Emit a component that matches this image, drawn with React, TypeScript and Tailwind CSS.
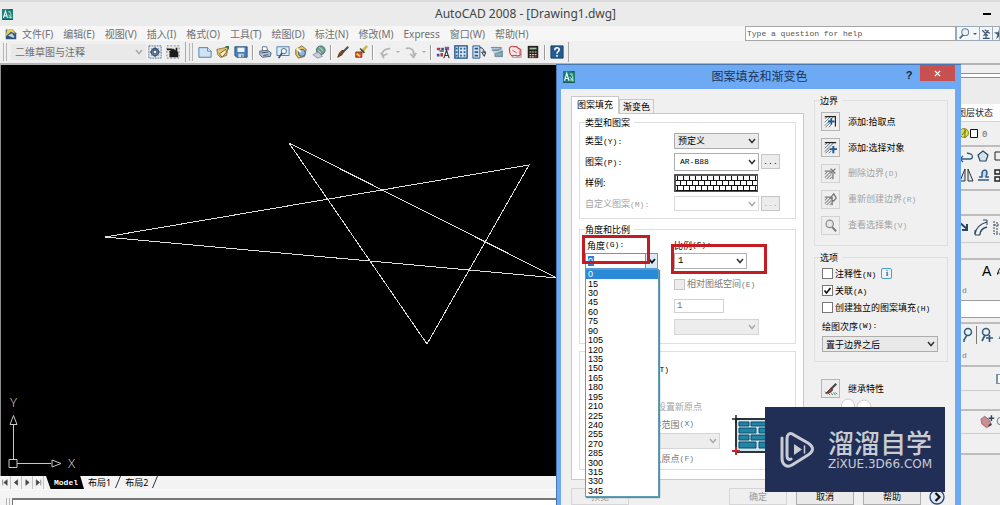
import React from "react";

const MENUS = ["文件(F)", "编辑(E)", "视图(V)", "插入(I)", "格式(O)", "工具(T)", "绘图(D)", "标注(N)", "修改(M)", "Express", "窗口(W)", "帮助(H)"];
const ANGLES = Array.from({ length: 24 }, (_, i) => i * 15);

function Svg({ children, className = "size-[14px]" }: { children: React.ReactNode; className?: string }) {
  return (
    <svg viewBox="0 0 16 16" fill="none" className={`${className} shrink-0`} aria-hidden="true">
      {children}
    </svg>
  );
}

function AppLogo({ className }: { className: string }) {
  return (
    <Svg className={className}>
      <rect width="16" height="16" fill="#1f7f78" />
      <path d="M2 13L5 3l3 10M3 10h4" stroke="#e8fbf5" strokeWidth="1.6" />
      <path d="M9 4h3v3M9 8l5 5M13 7v7M9 12h4" stroke="#a9e8d4" strokeWidth="1.4" />
      <path d="M0 15.500h16M11 1h4" stroke="#0c4a4a" />
    </Svg>
  );
}

const tool: Record<string, React.ReactNode> = {
  new: (
    <>
      <path d="M1 3h10l4 4v7H1z" fill="#cfe3f5" stroke="#47759f" />
      <path d="M11 3v4h4" fill="#fff" stroke="#47759f" />
    </>
  ),
  open: (
    <>
      <path d="M1 5l5-1 8-2-2 10-7 2-3-3z" fill="#e2c87c" stroke="#8b6d2c" />
      <path d="M4 10l7-5 1 3-5 6z" fill="#fff3c4" stroke="#6d5423" />
      <path d="M11 2l3 0v3" stroke="#2e6c3c" strokeWidth="1.5" />
    </>
  ),
  save: (
    <>
      <path d="M1 2h14v12H3l-2-2z" fill="#4a7fb4" stroke="#244b78" />
      <path d="M4 3h8v5H4z" fill="#e9f3fb" />
      <path d="M5 10h6v4H5z" fill="#cddbe8" />
      <path d="M9 11v3" stroke="#244b78" />
    </>
  ),
  print: (
    <>
      <path d="M5 7V2h5l1 5" fill="#fff" stroke="#58667c" />
      <path d="M2 7l9-1 4 3-1 4-9 1-3-3z" fill="#b9c6d6" stroke="#45536b" />
      <path d="M4 9l8-1M6 12l6-1" stroke="#33425b" />
    </>
  ),
  preview: (
    <>
      <path d="M1 2h14v10H1z" fill="#dcecfa" stroke="#47759f" />
      <circle cx="9" cy="7" r="3" fill="#f6fbff" stroke="#3b5878" />
      <path d="M7 9l-4 6" stroke="#3b5878" strokeWidth="2" />
    </>
  ),
  publish: (
    <>
      <path d="M2 5l7-4 5 4-2 8-7 2-3-4z" fill="#e6c359" stroke="#7b672c" />
      <circle cx="9" cy="9" r="4" fill="#8fb8da" stroke="#34547a" />
      <path d="M3 4l5 4" stroke="#fff" strokeWidth="2" />
    </>
  ),
  web: (
    <>
      <circle cx="10" cy="6" r="5" fill="#6d9d8b" stroke="#3b6a70" />
      <path d="M8 3c3 0 3 3 5 4M7 6l3 3" stroke="#d6eddd" />
      <path d="M1 11l6-3 5 5-6 2z" fill="#c8ced6" stroke="#8b939e" />
    </>
  ),
  match: (
    <>
      <path d="M14 2L8 8" stroke="#555" strokeWidth="2.500" />
      <path d="M9 7l-2 4-5 3 2-5 3-3z" fill="#8a4d23" stroke="#462813" />
    </>
  ),
  block: (
    <>
      <path d="M15 1L8 9" stroke="#d9b23b" strokeWidth="3" />
      <path d="M2 8h7v6H2z" fill="#d94e40" stroke="#7f2923" />
      <path d="M7 4l5 5" stroke="#375a31" strokeWidth="2" />
      <path d="M3 10l4 3" stroke="#ffd54a" strokeWidth="2" />
    </>
  ),
  undo: <path d="M7 15c-5-5-1-11 7-11M3 9l3 3 5-2" stroke="#b3b5b8" strokeWidth="2" />,
  redo: <path d="M2 4c6-2 10 2 9 8M7 10l4 4 3-5" stroke="#b3b5b8" strokeWidth="2" />,
  properties: (
    <>
      <path d="M1 2h14v11H1z" fill="#f3f4fa" />
      <path d="M1 3h4v3H1zM5 9h3v4H5z" fill="#c0334a" />
      <path d="M6 3h3v3H6zM1 10h3v3H1z" fill="#33509e" />
      <path d="M10 2h5v4h-5z" fill="#7f59a8" />
      <path d="M4 7h5" stroke="#3e8b55" strokeWidth="2" />
      <path d="M9 15l3-9 3 9M10 12h4" stroke="#333" strokeWidth="1.300" />
    </>
  ),
  center: (
    <>
      <path d="M1 1h14v14H1z" fill="#d4e4f3" stroke="#1d4e80" strokeWidth="1.500" />
      <path d="M5 1v14" stroke="#1d4e80" />
      <path d="M7 4h2M11 4h2M7 8h2M11 8h2M7 12h2M11 12h2M2 4h2M2 8h2M2 12h2" stroke="#245b93" strokeWidth="2" />
    </>
  ),
  palettes: (
    <>
      <path d="M1 1h8v14H1z" fill="#d4e4f3" stroke="#1d4e80" />
      <path d="M3 4h4M3 8h4M3 12h4" stroke="#245b93" strokeWidth="2" />
      <path d="M9 3c4 0 5 3 5 6M11 8h5l-2 5z" fill="#bed0df" stroke="#222c3a" />
    </>
  ),
  sheet: (
    <>
      <path d="M1 2h13l1 12H6z" fill="#c6d3dc" />
      <path d="M1 3h12M2 6h7l4-2M6 10l8-3v6H6z" fill="#8eaabb" stroke="#7793a4" strokeWidth="1.500" />
    </>
  ),
  markup: (
    <>
      <path d="M5 5h10v9H5z" fill="#edf1f6" stroke="#8690a4" />
      <path d="M2 3c2-3 4-1 5-1s3-1 4 1 3 0 3 3-1 2 0 4-3 3-5 2-3 1-5 0-2-2-2-4-1-3 0-5z" fill="#fce4e4" stroke="#c4424e" strokeWidth="1.300" />
      <path d="M5 6l5 3" stroke="#c4424e" />
    </>
  ),
  calc: (
    <>
      <path d="M2 1h12v14H2z" fill="#24211f" />
      <path d="M4 3h8v2H4z" fill="#a5c2a0" />
      <path d="M4 8h2M7 8h2M10 8h2M4 11h2M7 11h2M10 11h2M4 13.500h2M7 13.500h2" stroke="#e4d9c8" strokeWidth="1.300" />
      <path d="M10 13.500h2" stroke="#d14d3b" strokeWidth="1.500" />
    </>
  ),
  help: (
    <>
      <path d="M1 1h14v14H1z" fill="#275b8f" stroke="#173d67" />
      <path d="M5.500 6c0-4 5-3.500 5-.5 0 2-2.500 2-2.500 4.500M8 11.500v2" stroke="#fff" strokeWidth="1.800" />
    </>
  ),
  gear: (
    <>
      <path d="M1 1h14v14H1z" fill="#e1e9f2" stroke="#5a6678" strokeDasharray="2 1" />
      <circle cx="8" cy="8" r="4" stroke="#3a5573" strokeWidth="2" />
      <path d="M8 2v12M2 8h12M4 4l8 8M12 4l-8 8" stroke="#3a5573" />
      <circle cx="8" cy="8" r="2" fill="#fff" stroke="#3a5573" />
    </>
  ),
  home: (
    <>
      <path d="M1 1h14v14H1z" fill="#e8e8e8" stroke="#777" strokeDasharray="2 2" />
      <path d="M3 8l5-4 6 4v6H4V8z" fill="#1c1c1c" />
      <path d="M12 3v4M1 5h6" stroke="#1c1c1c" strokeWidth="2" />
    </>
  ),
};

function Tool({ name, label }: { name: string; label: string }) {
  return (
    <button aria-label={label} className="flex h-5 w-[18px] items-center justify-center">
      <Svg>{tool[name]}</Svg>
    </button>
  );
}

const Sep = () => <span className="mx-[2px] h-[15px] w-[2px] border-l border-[#9b9b9b] bg-white" />;
const Grip = () => <span className="h-[18px] w-[4px] border-x border-[#b5b5b5]" />;
const Drop = () => (
  <button aria-label="更多" className="flex h-5 w-2 items-center justify-center">
    <span className="border-x-2 border-t-2 border-x-transparent border-t-[#aaa]" />
  </button>
);

function Key({ children }: { children: React.ReactNode }) {
  return <span className="font-['Liberation_Mono',monospace] text-[8px]">{children}</span>;
}

function Combo({ id, label, value, className, disabled, soft }: { id: string; label: string; value: string; className: string; disabled?: boolean; soft?: boolean }) {
  return (
    <span className={`relative flex border ${className}`}>
      <select id={id} aria-label={label} disabled={disabled} defaultValue={value} className="w-full appearance-none bg-transparent pl-[3px] leading-none">
        <option value={value}>{value}</option>
      </select>
      <svg viewBox="0 0 8 6" className="pointer-events-none absolute right-[2px] top-1/2 h-[6px] w-2 -translate-y-1/2" fill="none" aria-hidden="true">
        <path d="M1 1l3 3.500L7 1" stroke={disabled || soft ? "#aaa" : "#333"} strokeWidth="1.500" />
      </svg>
    </span>
  );
}

function Group({ title, className = "", children }: { title: string; className?: string; children: React.ReactNode }) {
  return (
    <fieldset className={`border border-[#dfdfdf] px-[5px] ${className}`}>
      <legend className="flex h-[15px] items-center pr-1 leading-none">{title}</legend>
      {children}
    </fieldset>
  );
}

function Field({ id, text, hot, dim, children }: { id: string; text: string; hot: string; dim?: boolean; children: React.ReactNode }) {
  return (
    <div className="flex h-[21px] items-center">
      <label htmlFor={id} className={`w-[89px] ${dim ? "text-[#a3a3a3]" : ""}`}>
        {text}
        <Key>{hot}</Key>
      </label>
      {children}
    </div>
  );
}

const MoreButton = ({ label, disabled }: { label: string; disabled?: boolean }) => (
  <button aria-label={label} disabled={disabled} className="ml-[2px] flex h-[15px] w-[19px] items-center justify-center border border-[#c6c6c6] bg-[#ececec] font-['Liberation_Mono',monospace] text-[8px] disabled:text-[#aaa]">
    ...
  </button>
);

const hatch = "M1 5l4-4M1 9l8-8M1 13L13 1M2 15l5-5M6 15l3-3";
const boundary: { text: string; hot?: string; dim?: boolean; art: React.ReactNode }[] = [
  {
    text: "添加:拾取点",
    art: (
      <>
        <path d="M1 2h14v12H1z" fill="#fff" />
        <path d={hatch} stroke="#3a4f5c" />
        <path d="M1 2h13v12" stroke="#222" strokeWidth="1.500" />
        <path d="M5 8h8M9 4v8" stroke="#1d5b92" strokeWidth="2.200" />
      </>
    ),
  },
  {
    text: "添加:选择对象",
    art: (
      <>
        <path d={hatch} stroke="#3a4f5c" />
        <path d="M1 2h14" stroke="#222" strokeWidth="1.500" />
        <path d="M7 10h9M11.500 6v9" stroke="#1d5b92" strokeWidth="2.400" />
      </>
    ),
  },
  {
    text: "删除边界",
    hot: "(D)",
    dim: true,
    art: (
      <>
        <path d="M1 9l3-3M1 13l7-7M3 15l6-6M7 15l3-3" stroke="#8c8c8c" strokeWidth="1.300" />
        <path d="M1 5h8M11 7v8M8 2l6 6M14 2L8 8" stroke="#777" strokeWidth="1.600" />
      </>
    ),
  },
  {
    text: "重新创建边界",
    hot: "(R)",
    dim: true,
    art: (
      <>
        <path d="M1 9l3-3M1 13l7-7M3 15l6-6M7 15l3-3" stroke="#8c8c8c" strokeWidth="1.300" />
        <path d="M1 5h7M10 15V5M8 6l4-5 3 5-3 4z" stroke="#777" strokeWidth="1.600" />
      </>
    ),
  },
  {
    text: "查看选择集",
    hot: "(V)",
    dim: true,
    art: (
      <>
        <circle cx="7" cy="6" r="4.500" fill="#e6e6e6" stroke="#8c8c8c" strokeWidth="1.500" />
        <path d="M10 10l5 5" stroke="#777" strokeWidth="2.500" />
      </>
    ),
  },
];

function Header() {
  return (
    <header className="shrink-0 bg-[#f0f0f0] text-[#707070]">
      <div className="relative flex h-[26px] items-center border-t-2 border-[#dcdcdc] bg-[#ebebeb]">
        <AppLogo className="ml-[2px] size-[11px]" />
        <h1 className="ml-[422px] font-['Noto_Sans',sans-serif] text-[12px] leading-none text-[#444]">AutoCAD 2008 - [Drawing1.dwg]</h1>
        <button aria-label="最小化" className="ml-auto mr-[9px] flex h-4 w-[8px] items-center">
          <span className="h-[2px] w-full bg-black" />
        </button>
      </div>
      <div className="flex h-[15px] items-stretch bg-[#f6f6f6]">
        <nav className="flex flex-1 items-center gap-[10px] whitespace-nowrap pl-[5px] text-[10px] leading-none">
          <Svg className="-mr-[5px] size-[12px]">
            <path d="M1 2h9l5 5v8H1z" fill="#31567f" />
            <path d="M1 11L3 1l7 1 4 6-6-3z" fill="#eed14c" />
            <path d="M4 10l5-3 4 5-2 1z" fill="#c3d3e4" />
          </Svg>
          {MENUS.map((m) => (
            <button key={m}>{m}</button>
          ))}
        </nav>
        <input aria-label="帮助搜索" defaultValue="Type a question for help" className="w-[211px] border border-[#a6a6a6] bg-white px-[1px] font-['Liberation_Mono',monospace] text-[8px] text-[#555]" />
        <div className="flex w-[44px] divide-x divide-[#9aabba] overflow-hidden border border-[#9aabba] bg-[#f4f6f8]">
          <button aria-label="搜索" className="flex w-[23px] shrink-0 items-center justify-between px-[2px]">
            <Svg className="size-[11px]">
              <circle cx="9" cy="6" r="5" fill="#e7f2fa" stroke="#6b7f99" strokeWidth="1.500" />
              <path d="M6 10l-5 5" stroke="#55627a" strokeWidth="2.500" />
            </Svg>
            <span className="border-x-2 border-t-2 border-x-transparent border-t-[#555]" />
          </button>
          <button aria-label="通讯中心" className="flex w-[13px] shrink-0 items-center justify-center">
            <Svg className="size-[10px]">
              <path d="M2 2l9 9M12 2L4 11M6 1l8 6M3 15h11M8 8v7" stroke="#3e5876" strokeWidth="2" />
            </Svg>
          </button>
          <button aria-label="收藏夹" className="flex w-[13px] shrink-0 items-center justify-center">
            <Svg className="size-[11px]">
              <path d="M8 0l2 6h6l-5 4 2 6-5-4-5 4 2-6-5-4h6z" fill="#4b5d78" />
            </Svg>
          </button>
        </div>
      </div>
      <div className="flex h-[24px] items-center border-b-2 border-[#b4b4b4] pl-[3px]">
        <Grip />
        <Combo id="workspace" label="工作空间" value="二维草图与注释" soft className="ml-[4px] h-4 w-[135px] border-transparent bg-[#e9e9e9] text-[10px]" />
        <div className="flex w-[40px] items-center border-r border-[#a9a9a9]">
          <Tool name="gear" label="工作空间设置" />
          <Tool name="home" label="我的工作空间" />
        </div>
        <span className="ml-[3px]" />
        <Grip />
        <div className="ml-[3px] flex items-center border-r border-[#a9a9a9] pr-[2px]">
          <Tool name="new" label="新建" />
          <Tool name="open" label="打开" />
          <Tool name="save" label="保存" />
          <Sep />
          <Tool name="print" label="打印" />
          <Tool name="preview" label="打印预览" />
          <Tool name="publish" label="发布" />
          <Tool name="web" label="三维DWF" />
          <Sep />
          <Tool name="match" label="特性匹配" />
          <Tool name="block" label="块编辑器" />
          <Sep />
          <Tool name="undo" label="放弃" />
          <Drop />
          <Tool name="redo" label="重做" />
          <Drop />
          <Sep />
          <Tool name="properties" label="特性" />
          <Tool name="center" label="设计中心" />
          <Tool name="palettes" label="工具选项板" />
          <Tool name="sheet" label="图纸集管理器" />
          <Tool name="markup" label="标记集管理器" />
          <Tool name="calc" label="快速计算器" />
          <Sep />
          <Tool name="help" label="帮助" />
        </div>
      </div>
    </header>
  );
}

function Drawing() {
  return (
    <section className="flex min-w-0 flex-1 flex-col">
      <div className="min-h-0 flex-1 border-l border-[#8d8d8d] bg-black">
        <svg className="h-full w-full" aria-label="图形">
          <path d="M104 172L528 100L426 279L288 78L556 213Z" fill="none" stroke="#dedede" strokeWidth="1" shapeRendering="crispEdges" />
          <g fill="none" stroke="#c9c9c9">
            <path d="M8 394.500h8v8H8zM12.500 394v-34M16 398.500h34M9 359.500l3.500-9 3.500 9zM51 395l9 3.500-9 3.500z" />
          </g>
          <g fill="#c9c9c9" className="font-['Noto_Sans',sans-serif] text-[13px] font-light">
            <text x="9" y="342">Y</text>
            <text x="67" y="403">X</text>
          </g>
        </svg>
      </div>
      <div className="flex h-[13px] shrink-0 items-stretch bg-[#f3f3f3] text-[9px] leading-none text-black">
        {["M3 3v10M11 3v10L5 8z", "M10 3v10L4 8z", "M5 3v10l6-5z", "M4 3v10l6-5zM12 3v10"].map((d) => (
          <button key={d} aria-label="切换布局" className="flex w-[11px] items-center justify-center border-r border-[#c4c4c4]">
            <Svg className="size-[9px]">
              <path d={d} fill="#444" stroke="#444" />
            </Svg>
          </button>
        ))}
        <button className="ml-[2px] w-[38px] bg-black pl-[2px] text-center font-['Liberation_Mono',monospace] text-[8px] font-bold text-white [clip-path:polygon(0_0,90%_0,100%_100%,12%_100%)]">Model</button>
        {["布局1", "布局2"].map((t) => (
          <React.Fragment key={t}>
            <button className="ml-[4px]">{t}</button>
            <svg viewBox="0 0 6 13" className="ml-[4px] h-[13px] w-[6px]" aria-hidden="true">
              <path d="M5.500 0L.5 12" stroke="#333" />
            </svg>
          </React.Fragment>
        ))}
      </div>
      <div className="flex h-[16px] shrink-0 flex-col border-t border-[#fafafa] bg-[#f4f4f4]">
        <span className="mt-[2px] h-[2px] bg-[#9b9b9b]" />
        <div className="mt-[6px] flex flex-1 pl-[6px]">
          <Grip />
          <span className="ml-[2px] flex-1 border-l border-t-2 border-[#777] bg-white" />
        </div>
      </div>
    </section>
  );
}

function Side() {
  const line = "shrink-0 border-t-2 border-[#bdbdbd]";
  const mono = "flex shrink-0 items-center pl-[7px] font-['Liberation_Mono',monospace] text-[8px] text-[#777]";
  return (
    <aside className="flex w-[45px] shrink-0 flex-col overflow-hidden bg-[#f0f0f0] text-[#222]">
      <div className="h-[8px] shrink-0" />
      <div className="h-[5px] shrink-0 border-y border-[#8f8f8f] bg-white" />
      <div className="h-[26px] shrink-0 bg-[#ececec]" />
      <div className="flex h-[17px] shrink-0 items-center whitespace-nowrap bg-white pl-[2px] text-[9px]">图层状态</div>
      <div className="flex h-[24px] shrink-0 items-center border-t border-[#d3d3d3] pl-[4px]">
        <svg viewBox="0 0 40 16" className="h-4 w-10" fill="none" aria-hidden="true">
          <circle cx="5" cy="7" r="4.500" fill="#e4dd3e" stroke="#8e8a2a" />
          <path d="M3 9l4-5M6 3v9" stroke="#5f742c" />
          <path d="M11.500 3.500h7v8h-7z" fill="#fff" stroke="#111" />
          <text x="23" y="11" fill="#666" className="font-['Liberation_Mono',monospace] text-[9px]">0</text>
        </svg>
      </div>
      <div className={`${line} flex h-[44px] items-center`}>
        <svg viewBox="0 0 45 42" className="h-[42px] w-[45px]" fill="none" stroke="#315b82" aria-hidden="true">
          <path d="M5 12h10c3 0 3-4 1-5l-4-1M8 9l-3 3 3 3" strokeWidth="1.300" />
          <path d="M28 4l5 4-2 6h-6l-2-6z" fill="#d3e3ee" stroke="#2c4660" strokeWidth="1.200" />
          <path d="M45 5h-5v8h5" stroke="#222" />
          <path d="M10 22v12H5zM13 22v12h5z" fill="#dce8f0" stroke="#333" />
          <path d="M23 33h11M24 30h3v-3c0-5 5-5 5-1 0 2-1 2-1 4h3" fill="#c5dae8" strokeWidth="1.500" />
          <path d="M40 23h5v4h-5zM40 30h5v4h-5z" stroke="#222" strokeWidth="1.500" />
        </svg>
      </div>
      <div className={`${line} h-[25px]`} />
      <div className={`${line} h-[28px]`}>
        <svg viewBox="0 0 45 26" className="h-[26px] w-[45px]" fill="none" stroke="#2a4660" aria-hidden="true">
          <path d="M4 6l8 7M12 8v6H7" strokeWidth="2" />
          <path d="M20 18c1-7 5-10 12-12M25 19c0-4 3-7 7-8" strokeWidth="1.300" />
          <path d="M20 14v5h5M28 4h4v5" />
          <path d="M39 5v13h6M39 9h6M42 6v11" strokeDasharray="2 1" />
        </svg>
      </div>
      <div className="h-[16px] shrink-0 border-t border-[#cecece]" />
      <div className={`${line} flex h-[24px] items-center gap-[6px] pl-[27px] font-['Liberation_Sans',sans-serif] text-[14px] text-black`}>
        <span>A</span>
        <svg viewBox="0 0 4 12" className="h-3 w-[4px]" fill="none" aria-hidden="true">
          <path d="M0 12L4 2M1 9h3" stroke="#111" strokeWidth="1.500" />
        </svg>
      </div>
      <div className={`${mono} h-[18px]`}>d</div>
      <div className="h-[18px] shrink-0 border-y border-[#9d9d9d] bg-white" />
      <div className={`${line} mt-[4px] flex h-[24px] items-center`}>
        <svg viewBox="0 0 45 22" className="h-[22px] w-[45px]" fill="none" stroke="#315b82" aria-hidden="true">
          <circle cx="13" cy="8" r="3.500" strokeWidth="1.500" />
          <path d="M12 11l-3 5M9 18v-3" strokeWidth="1.500" />
          <path d="M21.500 2v18" stroke="#777" />
          <circle cx="31" cy="8" r="3.500" strokeWidth="1.500" />
          <path d="M30 11l-3 6M31 14h7M34.500 11v7" strokeWidth="1.700" />
          <path d="M44 15l2-4" />
        </svg>
      </div>
      <div className={`${mono} h-[19px]`}>d</div>
      <div className={`${line} flex h-[25px] items-center justify-end`}>
        <span className="h-[10px] w-[4px] border-y border-l-2 border-[#7c92ac] bg-white" />
      </div>
      <div className="h-[19px] shrink-0 border-t border-[#cecece]" />
      <div className={`${line} flex h-[24px] items-center pl-[24px]`}>
        <svg viewBox="0 0 22 16" className="h-4 w-[22px]" fill="none" aria-hidden="true">
          <path d="M2 5l4-3 5 4 2 5-5 3-5-4z" fill="#cc8e91" stroke="#9d6d75" />
          <path d="M10 4h6M13 1v6M10 12l3-2" stroke="#31465e" strokeWidth="1.500" />
          <circle cx="23" cy="7" r="4" stroke="#777" />
        </svg>
      </div>
      <div className="h-[20px] shrink-0 border-t border-[#cecece]" />
      <div className={`${line} flex-1 bg-[#ececec]`} />
    </aside>
  );
}

function PatternTab() {
  return (
    <div className="h-[367px] border border-[#c8c8c8] bg-white px-[7px] pt-px">
      <Group title="类型和图案" className="pb-[4px]">
        <Field id="type" text="类型" hot="(Y):">
          <Combo id="type" label="类型" value="预定义" className="h-4 w-[85px] border-[#adadad] bg-[#ebebeb]" />
        </Field>
        <Field id="pattern" text="图案" hot="(P):">
          <Combo id="pattern" label="图案" value="AR-B88" className="h-[18px] w-[85px] border-[#adadad] bg-white pl-[2px] font-['Liberation_Mono',monospace] text-[8px]" />
          <MoreButton label="浏览图案" />
        </Field>
        <Field id="swatch" text="样例:" hot="">
          <button id="swatch" aria-label="样例" className="h-[18px] w-[84px] border border-l-2 border-t-2 border-[#555]">
            <svg className="size-full" aria-hidden="true">
              <defs>
                <pattern id="brick" width="6" height="10" patternUnits="userSpaceOnUse">
                  <path d="M0 4.500h6M0 9.500h6M1.500 0v5M4.500 5v5" stroke="#111" />
                </pattern>
              </defs>
              <rect width="100%" height="100%" fill="#fff" />
              <rect width="100%" height="100%" fill="url(#brick)" />
            </svg>
          </button>
        </Field>
        <Field id="custom" text="自定义图案" hot="(M):" dim>
          <Combo id="custom" label="自定义图案" value="" disabled className="h-[15px] w-[85px] border-[#dadada] bg-white" />
          <MoreButton label="浏览自定义图案" disabled />
        </Field>
      </Group>

      <Group title="角度和比例" className="mt-[3px] h-[122px]">
        <div className="grid grid-cols-[73px_1fr] gap-x-4">
          <div className="relative">
            <label htmlFor="angle" className="flex h-4 items-center pl-[2px]">
              角度<Key>(G):</Key>
            </label>
            <div className="flex h-[16px] w-[73px] items-center border border-[#5b9bd5] bg-white pl-[2px]">
              <input id="angle" defaultValue="0" className="w-[6px] bg-[#2b80d8] font-['Liberation_Sans',sans-serif] leading-none text-white" />
              <button aria-label="展开角度列表" className="ml-auto flex h-full w-[12px] items-center justify-center border-l border-[#5b9bd5] bg-[#d9ebfb]">
                <svg viewBox="0 0 8 6" className="h-[6px] w-2" fill="none" aria-hidden="true">
                  <path d="M1 1l3 3.500L7 1" stroke="#111" strokeWidth="1.800" />
                </svg>
              </button>
            </div>
            <ul role="listbox" aria-label="角度" className="absolute left-0 top-8 z-10 flex h-[228px] w-[74px] flex-col border border-[#5f9db5] bg-white font-['Liberation_Sans',sans-serif] leading-none text-black shadow-[1px_1px_1px_#6685a0]">
              {ANGLES.map((a) => (
                <li key={a} role="option" aria-selected={a === 0} className="flex min-h-0 flex-1 items-center pl-[2px] aria-selected:bg-[#2b8ad6] aria-selected:text-white">
                  {a}
                </li>
              ))}
            </ul>
          </div>
          <div>
            <label htmlFor="scale" className="flex h-4 items-center">
              比例<Key>(S):</Key>
            </label>
            <Combo id="scale" label="比例" value="1" className="h-[16px] w-[73px] border-[#adadad] bg-white font-['Liberation_Mono',monospace]" />
            <label className="mt-[6px] flex h-[18px] items-center gap-[2px] whitespace-nowrap text-[#777]">
              <input type="checkbox" disabled className="size-[11px] appearance-none border border-[#c6c6c6] bg-[#ececec]" />
              <span>
                相对图纸空间<Key>(E)</Key>
              </span>
            </label>
            <input aria-label="间距" disabled defaultValue="1" className="mt-[6px] block h-[14px] w-[50px] border border-[#d2d2d2] bg-white pl-[2px] font-['Liberation_Mono',monospace] text-[#777]" />
            <Combo id="pen" label="ISO 笔宽" value="" disabled className="mt-[6px] h-4 w-[85px] border-[#d5d5d5] bg-[#ededed]" />
          </div>
        </div>
      </Group>

      <div className="mt-[7px] flex h-[119px] border border-[#dfdfdf] pl-[5px] pt-[9px]">
        <div className="flex w-[135px] flex-col whitespace-nowrap text-[#777]">
          <label className="flex h-[18px] w-[84px] items-center justify-end text-black">
            使用当前原点<Key>(T)</Key>
          </label>
          <span className="h-[18px]" />
          <button className="flex h-[18px] w-[117px] items-center justify-end text-[#a3a3a3]">单击以设置新原点</button>
          <label htmlFor="extent" className="flex h-[18px] w-[109px] items-center justify-end">
            默认为边界范围<Key>(X)</Key>
          </label>
          <Combo id="extent" label="边界范围" value="" disabled className="h-4 w-[135px] border-[#d5d5d5] bg-[#ededed]" />
          <label className="flex h-[19px] w-[109px] items-center justify-end">
            存储为默认原点<Key>(F)</Key>
          </label>
        </div>
        <svg viewBox="0 0 60 42" className="ml-[12px] mt-[53px] h-[42px] w-[60px]" aria-hidden="true">
          <path d="M4 5h56v33H4z" fill="#cfe6ee" stroke="#333" strokeWidth="2" />
          <path d="M7 8h10v4H7zM19 8h16v4H19zM37 8h16v4H37zM7 14h17v5H7zM27 14h16v5H27zM45 14h14v5H45zM7 21h10v5H7zM19 21h16v5H19zM37 21h16v5H37zM7 28h17v6H7zM27 28h16v6H27zM45 28h14v6H45z" fill="#2385a6" stroke="#0b4b68" />
          <path d="M0 5h8M4 1v8" stroke="#222" strokeWidth="1.500" />
          <path d="M0 37h8M4 33v8" stroke="#c32828" strokeWidth="2" />
        </svg>
      </div>
    </div>
  );
}

function HatchDialog() {
  const footer = "h-[17px] w-[58px] border border-[#adadad] bg-[#e9e9e9] leading-none disabled:border-[#d6d6d6] disabled:bg-[#efefef] disabled:text-[#999]";
  return (
    <section role="dialog" aria-label="图案填充和渐变色" className="absolute bottom-0 left-[556px] top-[64px] flex w-[405px] flex-col overflow-hidden border-l border-t border-[#4b78b0] bg-[#6eaaf3] pl-[4px] pr-[6px] text-[9px] leading-none text-black">
      <div className="flex h-[24px] shrink-0 items-center">
        <AppLogo className="ml-[2px] size-[12px]" />
        <h2 className="flex-1 pl-[97px] text-center text-[12px] text-[#17345c]">图案填充和渐变色</h2>
        <button aria-label="帮助" className="ml-[53px] w-[18px] pb-[4px] font-['Liberation_Sans',sans-serif] text-[11px] font-bold text-[#14243e]">?</button>
        <button aria-label="关闭" className="mb-auto ml-[2px] flex h-[16px] w-[35px] items-center justify-center bg-[#c75050]">
          <svg viewBox="0 0 8 8" className="size-[7px]" aria-hidden="true">
            <path d="M1 1l6 6M7 1L1 7" stroke="#fff" strokeWidth="1.600" />
          </svg>
        </button>
      </div>
      <div className="h-[430px] shrink-0 bg-[#f0f0f0] pl-[10px] pr-[7px]">
        <div className="flex gap-[10px]">
          <div className="w-[233px] pt-[7px]">
            <div role="tablist" className="flex h-[17px] items-end">
              <button role="tab" aria-selected="true" className="-mb-px h-[18px] w-[48px] border border-b-0 border-[#c8c8c8] bg-white pb-[3px]">图案填充</button>
              <button role="tab" aria-selected="false" className="h-[14px] w-[35px] border border-b-0 border-[#c8c8c8]">渐变色</button>
            </div>
            <PatternTab />
          </div>
          <div className="flex-1 pt-[4px]">
            <Group title="边界" className="pb-[7px]">
              {boundary.map((b) => (
                <div key={b.text} className="flex h-[26px] items-center">
                  <button id={b.text} aria-label={b.text} disabled={b.dim} className="ml-px flex size-[19px] items-center justify-center border border-[#b5b5b5] bg-[#eee] disabled:border-[#d2d2d2]">
                    <Svg className="size-[13px]">{b.art}</Svg>
                  </button>
                  <label htmlFor={b.text} className={`ml-[8px] whitespace-nowrap ${b.dim ? "text-[#a3a3a3]" : ""}`}>
                    {b.text}
                    {b.hot && <Key>{b.hot}</Key>}
                  </label>
                </div>
              ))}
            </Group>
            <Group title="选项" className="mt-[4px] pb-[9px]">
              {[
                ["注释性", "(N)"],
                ["关联", "(A)"],
                ["创建独立的图案填充", "(H)"],
              ].map(([t, k]) => (
                <div key={t} className="ml-[2px] flex h-[17px] items-center whitespace-nowrap">
                  <label className="flex items-center gap-[2px]">
                    <span className="relative flex">
                      <input type="checkbox" defaultChecked={k === "(A)"} className="peer size-[11px] appearance-none border border-[#777] bg-white" />
                      <svg viewBox="0 0 11 11" className="pointer-events-none absolute inset-0 hidden size-[11px] peer-checked:block" fill="none" aria-hidden="true">
                        <path d="M2.500 5.500L4.500 8l4-5" stroke="#111" strokeWidth="1.700" />
                      </svg>
                    </span>
                    <span>
                      {t}
                      <Key>{k}</Key>
                    </span>
                  </label>
                  {k === "(N)" && (
                    <button aria-label="注释性信息" className="ml-[5px] flex size-[11px] items-center justify-center rounded-[2px] border border-[#4f9bc4] bg-[#e9f6fc] font-['Liberation_Serif',serif] font-bold text-[#2877aa]">
                      i
                    </button>
                  )}
                </div>
              ))}
              <label htmlFor="order" className="ml-[2px] flex h-[20px] items-center">
                绘图次序<Key>(W):</Key>
              </label>
              <Combo id="order" label="绘图次序" value="置于边界之后" className="ml-[2px] h-4 w-[116px] border-[#adadad] bg-[#e9e9e9]" />
            </Group>
            <div className="mt-[17px] flex items-center pl-[7px]">
              <button id="inherit" aria-label="继承特性" className="flex size-[19px] items-center justify-center border border-[#b5b5b5] bg-[#eee]">
                <Svg>
                  <path d="M14 2L8 8" stroke="#444" strokeWidth="2.500" />
                  <path d="M8 7l2 2-3 3-5 1z" fill="#a43c2d" stroke="#3a2a20" />
                  <path d="M1 11l3 3M4 12l3 3M8 12l2 3M11 12l2 3M13 12l2 2" stroke="#2d7c6b" />
                </Svg>
              </button>
              <label htmlFor="inherit" className="ml-[8px]">继承特性</label>
            </div>
            <svg viewBox="0 0 34 14" className="ml-[26px] h-[14px] w-[34px]" fill="#fff" stroke="#ccc" aria-hidden="true">
              <ellipse cx="8" cy="8" rx="6.500" ry="7" />
              <ellipse cx="24" cy="9" rx="7" ry="7" />
            </svg>
          </div>
        </div>
        <div className="mt-[8px] flex items-center">
          <button disabled className={footer}>预览</button>
          <button disabled className={`${footer} ml-auto`}>确定</button>
          <button className={`${footer} ml-[9px]`}>取消</button>
          <button className={`${footer} ml-[9px]`}>帮助</button>
          <button aria-label="更多选项" className="ml-[8px] mr-[3px]">
            <Svg className="size-[16px]">
              <circle cx="8" cy="8" r="7" fill="#dfe9f6" stroke="#27436e" strokeWidth="1.300" />
              <path d="M6.500 4l4 4-4 4" stroke="#111" strokeWidth="2.200" />
            </Svg>
          </button>
        </div>
      </div>
    </section>
  );
}

function Watermark() {
  return (
    <div className="absolute left-[765px] top-[407px] flex h-[85px] w-[180px] items-center gap-[13px] bg-[#212f56] pl-[14px] text-[#c9ccd3]">
      <svg viewBox="0 0 36 38" className="h-[38px] w-[36px] shrink-0" fill="none" stroke="#c9ccd3" strokeWidth="3" strokeLinecap="round" aria-hidden="true">
        <path d="M3 7v20c0 7 5 10 10 7l16-10c6-4 6-8 0-12L15 4C11 1 8 3 8 8v17c0 3 2 4 4 3" />
        <path d="M15 13l8 5.500-8 5.500z" fill="#c9ccd3" stroke="none" />
        <path d="M25.500 15v7" strokeWidth="1.500" />
      </svg>
      <div className="flex flex-col gap-[2px] whitespace-nowrap leading-none">
        <strong className="text-[26px] font-medium leading-[26px]">溜溜自学</strong>
        <span className="font-['DejaVu_Sans',sans-serif] text-[12px]">ZiXUE.3D66.COM</span>
      </div>
    </div>
  );
}

export default function App() {
  return (
    <div className="relative flex h-screen flex-col overflow-hidden bg-[#f0f0f0] font-['Noto_Sans','Noto_Sans_CJK_SC',sans-serif]">
      <Header />
      <main className="flex min-h-0 flex-1">
        <Drawing />
        <Side />
      </main>
      <HatchDialog />
      <div className="pointer-events-none absolute left-[582px] top-[235px] h-[29px] w-[68px] border-3 border-[#c41c22]" />
      <div className="pointer-events-none absolute left-[671px] top-[244px] h-[30px] w-[96px] border-3 border-[#c41c22]" />
      <Watermark />
    </div>
  );
}
